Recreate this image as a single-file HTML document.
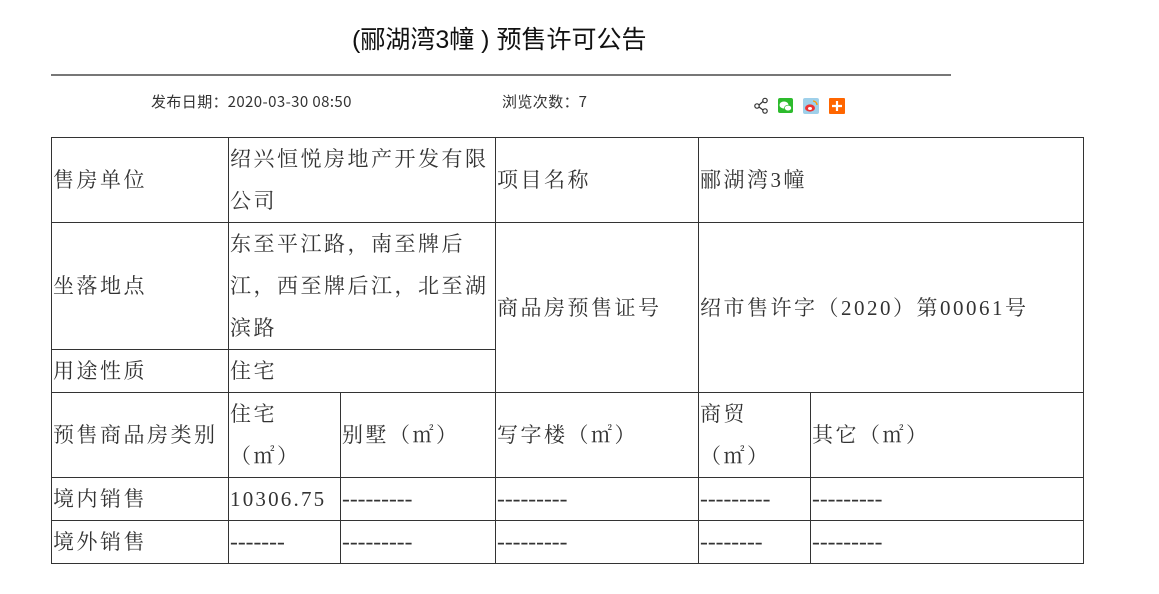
<!DOCTYPE html>
<html><head><meta charset="utf-8">
<style>
body{margin:0;background:#fff;width:1159px;height:594px;overflow:hidden;position:relative;font-family:"Liberation Sans","Noto Sans CJK SC",sans-serif;}
.title{position:absolute;left:352px;top:24px;font-size:25px;color:#111;white-space:nowrap;line-height:32px;}
.hr{position:absolute;left:51px;top:74px;width:900px;height:2px;background:#777;}
.meta{position:absolute;top:93px;font-size:15px;color:#333;white-space:nowrap;line-height:18px;letter-spacing:0.4px;font-family:"Noto Sans CJK SC",sans-serif;}
.c{display:inline-block;width:15px;text-align:center;}
table{position:absolute;left:51px;top:137px;border-collapse:collapse;table-layout:fixed;font-family:"Liberation Serif","Noto Serif CJK SC",serif;font-size:21px;letter-spacing:2.5px;color:#333;}
td{border:1px solid #333;padding:0 0 0 1px;vertical-align:middle;line-height:42px;overflow:hidden;}
td.d{letter-spacing:0;font-size:23.5px;}
td.n{letter-spacing:2.2px;}
</style></head><body>
<div class="title">(郦湖湾3幢 ) 预售许可公告</div>
<div class="hr"></div>
<div class="meta" style="left:151px">发布日期<span class="c">：</span>2020-03-30 08:50</div>
<div class="meta" style="left:502px">浏览次数<span class="c">：</span>7</div>
<svg style="position:absolute;left:752px;top:96px" width="100" height="20" viewBox="0 0 100 20">
<g fill="none" stroke="#333" stroke-width="1.2"><circle cx="5" cy="10" r="2.2"/><circle cx="13" cy="4.5" r="2.2"/><circle cx="13" cy="15" r="2.2"/><path d="M7 9 L11 5.5 M7 11 L11 14"/></g>
<rect x="26" y="2" width="15" height="15" rx="2" fill="#2dbb2d"/><ellipse cx="32" cy="9" rx="4.5" ry="3.5" fill="#fff"/><ellipse cx="36" cy="12" rx="3.5" ry="2.8" fill="#fff" stroke="#2dbb2d" stroke-width=".6"/>
<rect x="51" y="2" width="16" height="16" rx="2" fill="#9fd0ea"/><ellipse cx="58" cy="12" rx="5" ry="3.6" fill="#e33"/><ellipse cx="58" cy="12.5" rx="2" ry="1.5" fill="#fff"/><path d="M61 5 a4 4 0 0 1 4 4" stroke="#f90" stroke-width="1.3" fill="none"/>
<rect x="77" y="2" width="16" height="16" rx="1" fill="#f60"/><path d="M85 5 V15 M80 10 H90" stroke="#fff" stroke-width="2.2"/>
</svg>
<table>
<colgroup><col style="width:177px"><col style="width:112px"><col style="width:155px"><col style="width:203px"><col style="width:112px"><col style="width:273px"></colgroup>
<tr style="height:85px"><td>售房单位</td><td colspan="2">绍兴恒悦房地产开发有限公司</td><td>项目名称</td><td colspan="2">郦湖湾3幢</td></tr>
<tr style="height:127px"><td>坐落地点</td><td colspan="2">东至平江路，南至牌后江，西至牌后江，北至湖滨路</td><td rowspan="2">商品房预售证号</td><td colspan="2" rowspan="2">绍市售许字（2020）第00061号</td></tr>
<tr style="height:43px"><td>用途性质</td><td colspan="2">住宅</td></tr>
<tr style="height:85px"><td>预售商品房类别</td><td>住宅<br>（㎡）</td><td>别墅（㎡）</td><td>写字楼（㎡）</td><td>商贸<br>（㎡）</td><td>其它（㎡）</td></tr>
<tr style="height:43px"><td>境内销售</td><td class="n">10306.75</td><td class="d">---------</td><td class="d">---------</td><td class="d">---------</td><td class="d">---------</td></tr>
<tr style="height:43px"><td>境外销售</td><td class="d">-------</td><td class="d">---------</td><td class="d">---------</td><td class="d">--------</td><td class="d">---------</td></tr>
</table>
</body></html>
